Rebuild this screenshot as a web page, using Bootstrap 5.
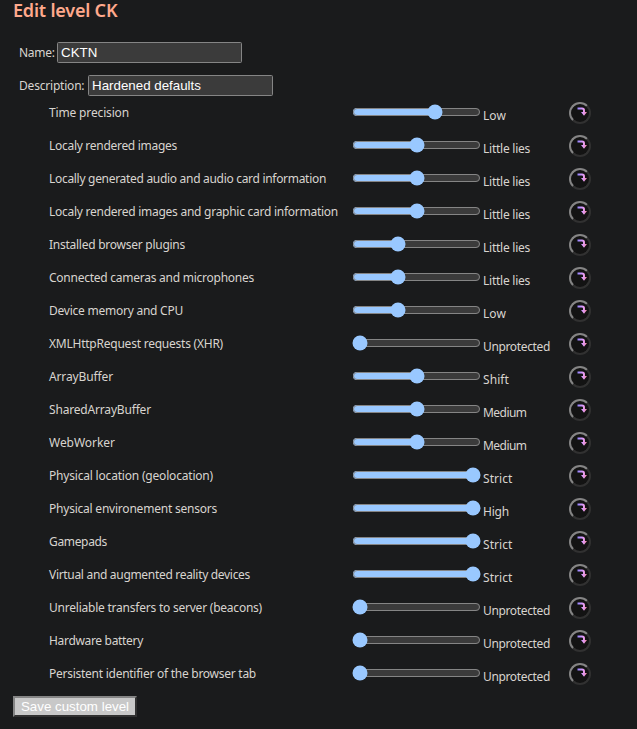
<!DOCTYPE html>
<html lang="en" data-bs-theme="dark">
<head>
<meta charset="utf-8">
<meta name="viewport" content="width=device-width, initial-scale=1">
<title>Edit level</title>
<link href="https://cdn.jsdelivr.net/npm/bootstrap@5.3.0/dist/css/bootstrap.min.css" rel="stylesheet">
<style>
:root{color-scheme:dark}
body{background:#1a1b1c;color:#d8d4cf;font:12px/18px "Noto Sans",sans-serif;height:729px;overflow:hidden}
h1{font-size:18px;line-height:20px;font-weight:600;color:#ffa98c;margin:0 13px 2px;letter-spacing:-.2px}
.field-row{height:33px;padding-left:19px}
.field-row label{white-space:nowrap;padding-top:1px}
.label-name{width:38px;letter-spacing:-.3px}
.label-desc{width:69px;letter-spacing:-.2px}
.fields{padding-top:14px}
.field-row input{width:185px;height:21px;font:13.333px "Liberation Sans",sans-serif;color:#fff;background:#3b3b3b;border:1px solid #858585;border-radius:1.5px;padding:0 3px}
#settings{margin:-6px 0 6px}
.setting{height:33px;padding-left:49px}
.setting-name{width:303px;height:18px;margin-top:8px}
.setting input{width:129px;height:16px;margin:8px 0 0}
.setting-value{width:88px;padding-left:2px;margin-top:11px}
.expand{width:22px;height:22px;border:2px outset #858585;border-radius:50%;background:#131313;margin-top:6px;padding:0}
.expand svg{margin:-3px 0 0 4px}
.save{margin-left:13px;width:124px;height:21px;border:2px outset #858585;background:#c8c8c8;color:#fff;font:13.333px "Liberation Sans",sans-serif}
</style>
<script src="https://cdn.jsdelivr.net/npm/bootstrap@5.3.0/dist/js/bootstrap.bundle.min.js"></script>
</head>
<body>
<h1>Edit level CK</h1>
<form>
<div class="fields">
<div class="field-row d-flex align-items-center"><label class="label-name" for="name">Name:</label><input id="name" type="text" value="CKTN"></div>
<div class="field-row d-flex align-items-center"><label class="label-desc" for="desc">Description:</label><input id="desc" type="text" value="Hardened defaults"></div>
</div>
<div id="settings"></div>
<button type="button" class="save d-flex align-items-center justify-content-center p-0">Save custom level</button>
</form>
<script>
// label, slider step, value, label width
const settings=[
["Time precision",4,"Low",80],
["Localy rendered images",3,"Little lies",128],
["Locally generated audio and audio card information",3,"Little lies",277],
["Localy rendered images and graphic card information",3,"Little lies",289],
["Installed browser plugins",2,"Little lies",136],
["Connected cameras and microphones",2,"Little lies",205],
["Device memory and CPU",2,"Low",134],
["XMLHttpRequest requests (XHR)",0,"Unprotected",174],
["ArrayBuffer",3,"Shift",64],
["SharedArrayBuffer",3,"Medium",102],
["WebWorker",3,"Medium",66],
["Physical location (geolocation)",6,"Strict",164],
["Physical environement sensors",6,"High",168],
["Gamepads",6,"Strict",58],
["Virtual and augmented reality devices",6,"Strict",201],
["Unreliable transfers to server (beacons)",0,"Unprotected",213],
["Hardware battery",0,"Unprotected",94],
["Persistent identifier of the browser tab",0,"Unprotected",207]];
const valueWidths={"Low":23,"Little lies":47,"Unprotected":67,"Shift":26,"Medium":43.5,"Strict":29.5,"High":26};
document.getElementById("settings").innerHTML=settings.map(([n,v,t,w])=>`<div class="setting d-flex align-items-start"><div class="setting-name text-nowrap"><span data-width="${w}">${n}</span></div><input type="range" min="0" max="6" value="${v}" aria-label="${n}"><div class="setting-value text-nowrap"><span data-width="${valueWidths[t]}">${t}</span></div><button type="button" class="expand d-flex align-items-center justify-content-center" aria-label="Details"><svg width="10" height="9" viewBox="0 0 10 9"><defs><linearGradient id="g" x1="0" x2="1"><stop stop-color="#9486ff"/><stop offset=".6" stop-color="#e39dfa"/><stop offset="1" stop-color="#f0849b"/></linearGradient></defs><path d="M.5 .5H5Q8 .5 8 3V5H10L7 8.8 4 5H6V3.4Q6 2.5 5 2.5H.5Z" fill="url(#g)"/></svg></button></div>`).join("");
document.querySelectorAll("[data-width]").forEach(s=>{
  s.style.letterSpacing=((+s.dataset.width-s.getBoundingClientRect().width)/s.textContent.length)+"px";
});
</script>
</body>
</html>
